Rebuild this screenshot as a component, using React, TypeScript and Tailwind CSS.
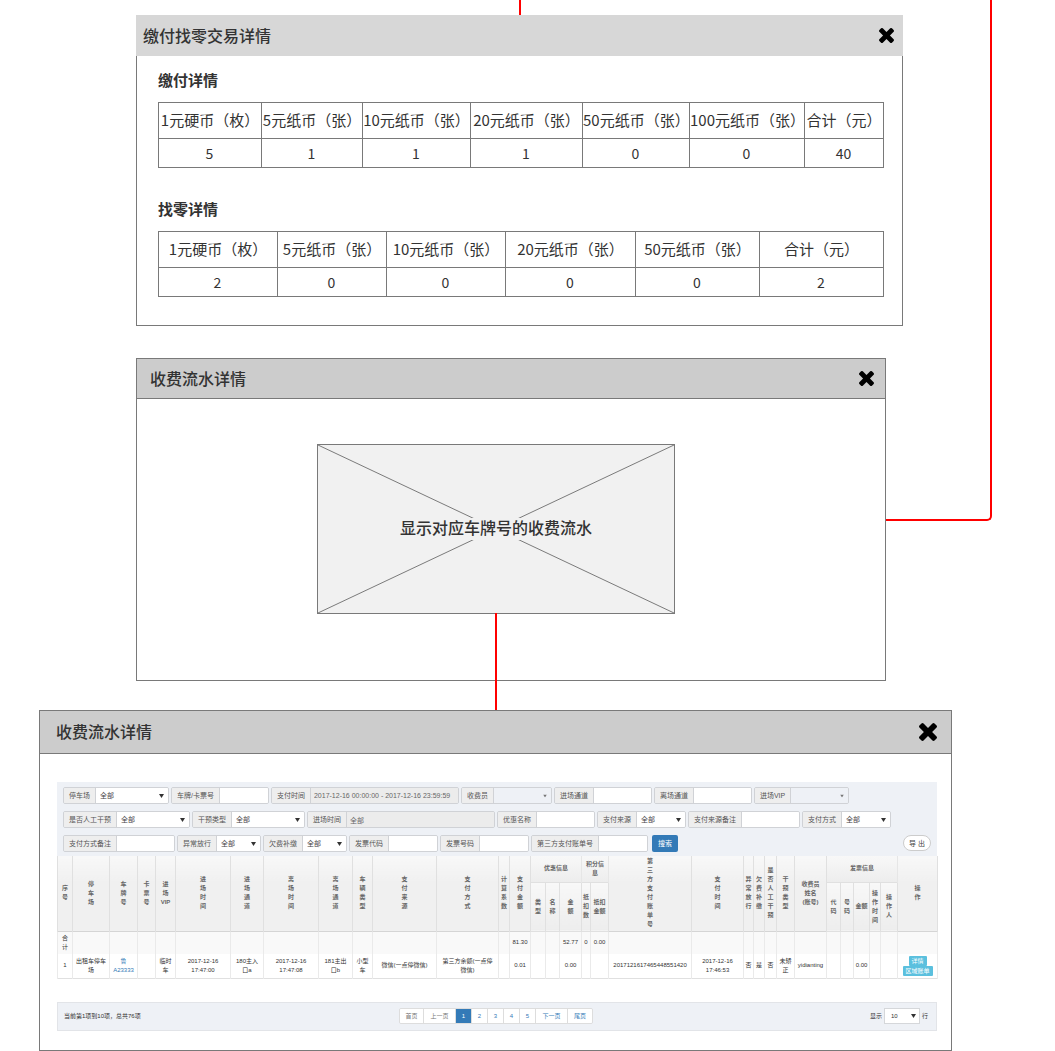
import React from 'react';

const CROSS_PATH =
  'M1490 1322q0 40-28 68l-136 136q-28 28-68 28t-68-28l-294-294-294 294q-28 28-68 28t-68-28l-136-136q-28-28-28-68t28-68l294-294-294-294q-28-28-28-68t28-68l136-136q28-28 68-28t68 28l294 294 294-294q28-28 68-28t68 28l136 136q28 28 28 68t-28 68l-294 294 294 294q28 28 28 68z';

function CloseButton({ large = false }: { large?: boolean }) {
  return (
    <button type="button" aria-label="关闭" className="cursor-pointer text-black">
      <svg
        viewBox="302 366 1188 1188"
        className={large ? 'block size-[18px]' : 'block size-[15px]'}
        fill="currentColor"
        aria-hidden="true"
      >
        <path d={CROSS_PATH} />
      </svg>
    </button>
  );
}

type MoneyColumn = { name: string; count: string; width: number };

const paid: MoneyColumn[] = [
  { name: '1元硬币（枚）', count: '5', width: 103 },
  { name: '5元纸币（张）', count: '1', width: 101 },
  { name: '10元纸币（张）', count: '1', width: 108 },
  { name: '20元纸币（张）', count: '1', width: 112 },
  { name: '50元纸币（张）', count: '0', width: 107 },
  { name: '100元纸币（张）', count: '0', width: 115 },
  { name: '合计（元）', count: '40', width: 79 },
];

const change: MoneyColumn[] = [
  { name: '1元硬币（枚）', count: '2', width: 119 },
  { name: '5元纸币（张）', count: '0', width: 109 },
  { name: '10元纸币（张）', count: '0', width: 119 },
  { name: '20元纸币（张）', count: '0', width: 130 },
  { name: '50元纸币（张）', count: '0', width: 124 },
  { name: '合计（元）', count: '2', width: 124 },
];

function MoneyTable({ columns, label }: { columns: MoneyColumn[]; label: string }) {
  return (
    <table
      aria-label={label}
      className="mt-3 w-full table-fixed border-collapse text-center leading-5 whitespace-nowrap"
    >
      <colgroup>
        {columns.map((c) => (
          <col key={c.name} style={{ width: c.width }} />
        ))}
      </colgroup>
      <thead className="text-[15px]">
        <tr className="h-9">
          {columns.map((c) => (
            <th key={c.name} scope="col" className="border border-[#797979] p-0 pb-[2px] font-normal">
              {c.name}
            </th>
          ))}
        </tr>
      </thead>
      <tbody className="text-sm leading-5">
        <tr className="h-[29px]">
          {columns.map((c) => (
            <td key={c.name} className="border border-[#797979] p-0 pr-px">
              {c.count}
            </td>
          ))}
        </tr>
      </tbody>
    </table>
  );
}

type FieldSpec = {
  label: string;
  kind: 'select' | 'text' | 'locked' | 'picker';
  size: 'xs' | 'sm' | 'md' | 'lg' | 'xl';
  value?: string;
};

const sizes = {
  xs: 'w-[43px]',
  sm: 'w-12',
  md: 'w-[57px]',
  lg: 'w-[72px]',
  xl: 'w-[147px]',
};

const filterRows: FieldSpec[][] = [
  [
    { label: '停车场', kind: 'select', size: 'lg', value: '全部' },
    { label: '车牌/卡票号', kind: 'text', size: 'sm' },
    { label: '支付时间', kind: 'locked', size: 'xl', value: '2017-12-16 00:00:00 - 2017-12-16 23:59:59' },
    { label: '收费员', kind: 'picker', size: 'md' },
    { label: '进场通道', kind: 'text', size: 'md' },
    { label: '离场通道', kind: 'text', size: 'md' },
    { label: '进场VIP', kind: 'picker', size: 'md' },
  ],
  [
    { label: '是否人工干预', kind: 'select', size: 'lg', value: '全部' },
    { label: '干预类型', kind: 'select', size: 'lg', value: '全部' },
    { label: '进场时间', kind: 'locked', size: 'xl', value: '全部' },
    { label: '优惠名称', kind: 'text', size: 'md' },
    { label: '支付来源', kind: 'select', size: 'sm', value: '全部' },
    { label: '支付来源备注', kind: 'text', size: 'md' },
    { label: '支付方式', kind: 'select', size: 'sm', value: '全部' },
  ],
  [
    { label: '支付方式备注', kind: 'text', size: 'md' },
    { label: '异常放行', kind: 'select', size: 'xs', value: '全部' },
    { label: '欠费补缴', kind: 'select', size: 'xs', value: '全部' },
    { label: '发票代码', kind: 'text', size: 'sm' },
    { label: '发票号码', kind: 'text', size: 'sm' },
    { label: '第三方支付账单号', kind: 'text', size: 'sm' },
  ],
];

function Arrow({ small = false }: { small?: boolean }) {
  return (
    <svg
      viewBox="0 0 10 8"
      className={
        small
          ? 'pointer-events-none absolute top-1/2 right-1 h-[3px] w-1 -translate-y-1/2'
          : 'pointer-events-none absolute top-1/2 right-1 size-[5px] -translate-y-1/2'
      }
      fill={small ? '#777' : '#333'}
      aria-hidden="true"
    >
      <path d="M0 0h10L5 8z" />
    </svg>
  );
}

function Field({ label, kind, size, value = '' }: FieldSpec) {
  const id = React.useId();
  return (
    <div className="flex h-[17px] shrink-0 overflow-hidden rounded-[2px] border border-[#d0d2d6]">
      <label
        htmlFor={id}
        className="flex items-center border-r border-[#d0d2d6] bg-[#eeeeee] px-[5px] text-[#555]"
      >
        {label}
      </label>
      <div className={`relative ${sizes[size]}`}>
        {kind === 'select' || kind === 'picker' ? (
          <>
            <select
              id={id}
              defaultValue={value}
              className={
                kind === 'select'
                  ? 'block size-full appearance-none bg-white pl-1 text-[#444]'
                  : 'block size-full appearance-none bg-[#eef1f6] pl-1 text-[#444]'
              }
            >
              <option value={value}>{value}</option>
            </select>
            <Arrow small={kind === 'picker'} />
          </>
        ) : (
          <input
            id={id}
            type="text"
            defaultValue={value}
            readOnly={kind === 'locked'}
            className={
              kind === 'locked'
                ? 'block size-full bg-[#ececec] pl-[3px] text-[#666]'
                : 'block size-full bg-white pl-[3px] text-[#444]'
            }
          />
        )}
      </div>
    </div>
  );
}

const columnWidths = [
  15, 37, 28, 18, 20, 55, 33, 55, 34, 20, 64, 62, 11, 21, 15, 14, 22, 9, 18, 83, 52, 10, 11, 12, 18, 32, 14, 13, 16,
  11, 17, 40,
];

type Head = { text: string; span?: number };

const topHeads: Head[] = [
  { text: '序\n号' },
  { text: '停\n车\n场' },
  { text: '车\n牌\n号' },
  { text: '卡\n票\n号' },
  { text: '进\n场\nVIP' },
  { text: '进\n场\n时\n间' },
  { text: '进\n场\n通\n道' },
  { text: '离\n场\n时\n间' },
  { text: '离\n场\n通\n道' },
  { text: '车\n辆\n类\n型' },
  { text: '支\n付\n来\n源' },
  { text: '支\n付\n方\n式' },
  { text: '计\n算\n系\n数' },
  { text: '支\n付\n金\n额' },
  { text: '优惠信息', span: 3 },
  { text: '积分信\n息', span: 2 },
  { text: '第\n三\n方\n支\n付\n账\n单\n号' },
  { text: '支\n付\n时\n间' },
  { text: '异\n常\n放\n行' },
  { text: '欠\n费\n补\n缴' },
  { text: '是\n否\n人\n工\n干\n预' },
  { text: '干\n预\n类\n型' },
  { text: '收费员\n姓名\n(账号)' },
  { text: '发票信息', span: 5 },
  { text: '操\n作' },
];

const subHeads = [
  '类\n型',
  '名\n称',
  '金\n额',
  '抵\n扣\n数',
  '抵扣\n金额',
  '代\n码',
  '号\n码',
  '金额',
  '操\n作\n时\n间',
  '操\n作\n人',
];

const totals: Record<number, string> = { 0: '合\n计', 13: '81.30', 16: '52.77', 17: '0', 18: '0.00' };

const record: Record<number, React.ReactNode> = {
  0: '1',
  1: '出租车停车\n场',
  2: (
    <a href="#plate" className="text-[#337ab7]">
      {'鲁\nA23333'}
    </a>
  ),
  4: '临时\n车',
  5: '2017-12-16\n17:47:00',
  6: '180主入\n口a',
  7: '2017-12-16\n17:47:08',
  8: '181主出\n口b',
  9: '小型\n车',
  10: '微信(一点停微信)',
  11: '第三方余额(一点停\n微信)',
  13: '0.01',
  16: '0.00',
  19: '2017121617465448551420',
  20: '2017-12-16\n17:46:53',
  21: '否',
  22: '是',
  23: '否',
  24: '未矫\n正',
  25: 'yidianting',
  28: '0.00',
  31: (
    <div className="flex flex-col items-center">
      <button type="button" className="h-[10px] rounded-[1px] bg-[#5bc0de] px-[3px] leading-[10px] text-white">
        详情
      </button>
      <button type="button" className="h-[10px] rounded-[1px] bg-[#5bc0de] px-[3px] leading-[10px] text-white">
        区域账单
      </button>
    </div>
  ),
};

function RecordTable() {
  return (
    <table className="w-full table-fixed border-collapse text-center text-[6px] leading-[9px] whitespace-pre text-[#333]">
      <colgroup>
        {columnWidths.map((w, i) => (
          <col key={i} style={{ width: w }} />
        ))}
      </colgroup>
      <thead className="text-[#666]">
        <tr className="h-[26px] bg-linear-to-b from-[#f8f8f8] to-[#ededed]">
          {topHeads.map((h, i) =>
            h.span ? (
              <th key={i} scope="colgroup" colSpan={h.span} className="border-x border-[#e6e6e6] p-0 font-bold">
                {h.text}
              </th>
            ) : (
              <th
                key={i}
                scope="col"
                rowSpan={2}
                className="border-x border-[#e0e0e0] bg-linear-to-b from-[#f8f8f8] via-[#f0f0f0] via-35% to-[#f0f0f0] p-0 font-bold"
              >
                {h.text}
              </th>
            ),
          )}
        </tr>
        <tr className="h-[49px]">
          {subHeads.map((text, i) => (
            <th
              key={i}
              scope="col"
              className="border border-[#e0e0e0] bg-linear-to-b from-[#f8f8f8] to-[#ededed] p-0 font-bold"
            >
              {text}
            </th>
          ))}
        </tr>
      </thead>
      <tbody>
        <tr className="h-[23px] border-t border-[#d5d5d5] bg-[#f9f9f9]">
          {columnWidths.map((_, i) => (
            <td key={i} className="border-x border-[#eaeaea] p-0">
              {totals[i]}
            </td>
          ))}
        </tr>
        <tr className="h-6 border-b border-[#e0e0e0]">
          {columnWidths.map((_, i) => (
            <td key={i} className="border-x border-[#eaeaea] p-0">
              <div className="flex justify-center">{record[i]}</div>
            </td>
          ))}
        </tr>
      </tbody>
    </table>
  );
}

const pages = ['首页', '上一页', '1', '2', '3', '4', '5', '下一页', '尾页'];

function pageClass(page: string) {
  if (page === '1') return 'w-4 bg-[#337ab7] text-white';
  if (page === '首页') return 'w-6 bg-white text-[#777]';
  if (page === '上一页') return 'w-8 bg-white text-[#777]';
  if (page === '下一页') return 'w-8 bg-white text-[#337ab7]';
  if (page === '尾页') return 'w-6 bg-white text-[#337ab7]';
  return 'w-4 bg-white text-[#337ab7]';
}

export default function App() {
  return (
    <main className="relative bg-white pt-[15px] font-['Noto_Sans_CJK_SC',sans-serif] text-[#333]">
      <div className="absolute top-0 right-[63px] h-[521px] w-[106px] rounded-br-[5px] border-r-2 border-b-2 border-[#ff0000]" />

      <section className="relative mr-[152px] ml-[136px]">
        <div className="absolute bottom-full left-1/2 h-[15px] w-[2px] -translate-x-1/2 bg-[#ff0000]" />
        <header className="flex h-[41px] items-center justify-between bg-[#d7d7d7] pr-[9px] pl-[7px]">
          <h2 className="pb-[2px] text-base leading-5 font-medium">缴付找零交易详情</h2>
          <CloseButton />
        </header>
        <div className="border-x border-b border-[#797979] pt-[14px] pr-[18px] pb-7 pl-[21px]">
          <h3 className="text-[15px] leading-5 font-bold">缴付详情</h3>
          <MoneyTable columns={paid} label="缴付详情" />
          <h3 className="mt-[31px] text-[15px] leading-5 font-bold">找零详情</h3>
          <MoneyTable columns={change} label="找零详情" />
        </div>
      </section>

      <section className="mt-8 mr-[169px] ml-[136px] border border-[#797979]">
        <header className="flex h-10 items-center justify-between border-b border-[#797979] bg-[#cccccc] pr-[11px] pl-[13px]">
          <h2 className="pb-[2px] text-base leading-5 font-medium">收费流水详情</h2>
          <CloseButton />
        </header>
        <div className="pt-[45px] pr-[210px] pb-[66px] pl-[180px]">
          <div className="relative flex h-[170px] items-center justify-center border border-[#797979] bg-[#f1f1f1]">
            <svg
              viewBox="0 0 100 100"
              preserveAspectRatio="none"
              className="absolute inset-0 size-full"
              stroke="#797979"
              aria-hidden="true"
            >
              <path d="M0 0L100 100M0 100L100 0" strokeWidth="1" vectorEffect="non-scaling-stroke" />
            </svg>
            <p className="relative bg-[#f1f1f1] pb-1 text-base leading-[18px] font-medium">显示对应车牌号的收费流水</p>
            <div className="absolute top-full left-1/2 z-10 h-[97px] w-[2px] -translate-x-1/2 bg-[#ff0000]" />
          </div>
        </div>
      </section>

      <section className="mt-[29px] mr-[103px] ml-[39px] border border-[#797979]">
        <header className="flex h-[43px] items-center justify-between border-b border-[#797979] bg-[#cccccc] pr-[14px] pl-4">
          <h2 className="pb-[2px] text-base leading-5 font-medium">收费流水详情</h2>
          <CloseButton large />
        </header>
        <div className="pt-7 pr-[14px] pb-[19px] pl-[17px] font-['Liberation_Sans','Noto_Sans_CJK_SC',sans-serif] text-[7px] leading-[9px]">
          <form
            className="flex flex-col gap-[7px] bg-[#eef1f6] px-[6px] pt-[5px] pb-1 whitespace-nowrap"
            onSubmit={(e) => e.preventDefault()}
          >
            {filterRows.map((row, i) => (
              <div key={i} className="flex gap-[2px]">
                {row.map((f) => (
                  <Field key={f.label} {...f} />
                ))}
                {i === 2 && (
                  <>
                    <button type="submit" className="ml-[2px] h-[17px] w-[26px] rounded-[2px] bg-[#337ab7] text-white">
                      搜索
                    </button>
                    <button
                      type="button"
                      className="ml-auto h-4 w-7 rounded-full border border-[#ccc] bg-white text-[#444]"
                    >
                      导 出
                    </button>
                  </>
                )}
              </div>
            ))}
          </form>

          <RecordTable />

          <footer className="mt-[23px] flex h-[29px] items-center justify-between border border-[#e2e4e8] bg-[#eef1f6] pr-2 pl-[6px] text-[6px]">
            <p className="flex-1">当前第1项到10项，总共76项</p>
            <nav aria-label="分页" className="flex h-4 divide-x divide-[#dddddd] overflow-hidden rounded-[2px] border border-[#dddddd]">
              {pages.map((p) => (
                <a
                  key={p}
                  href="#page"
                  aria-current={p === '1' ? 'page' : undefined}
                  className={`flex items-center justify-center ${pageClass(p)}`}
                >
                  {p}
                </a>
              ))}
            </nav>
            <div className="flex flex-1 items-center justify-end gap-[2px]">
              <label htmlFor="page-size">显示</label>
              <span className="relative">
                <select
                  id="page-size"
                  defaultValue="10"
                  className="block h-4 w-9 appearance-none border border-[#d5d7da] bg-white pl-[6px]"
                >
                  <option value="10">10</option>
                </select>
                <Arrow />
              </span>
              <span>行</span>
            </div>
          </footer>
        </div>
      </section>
    </main>
  );
}
